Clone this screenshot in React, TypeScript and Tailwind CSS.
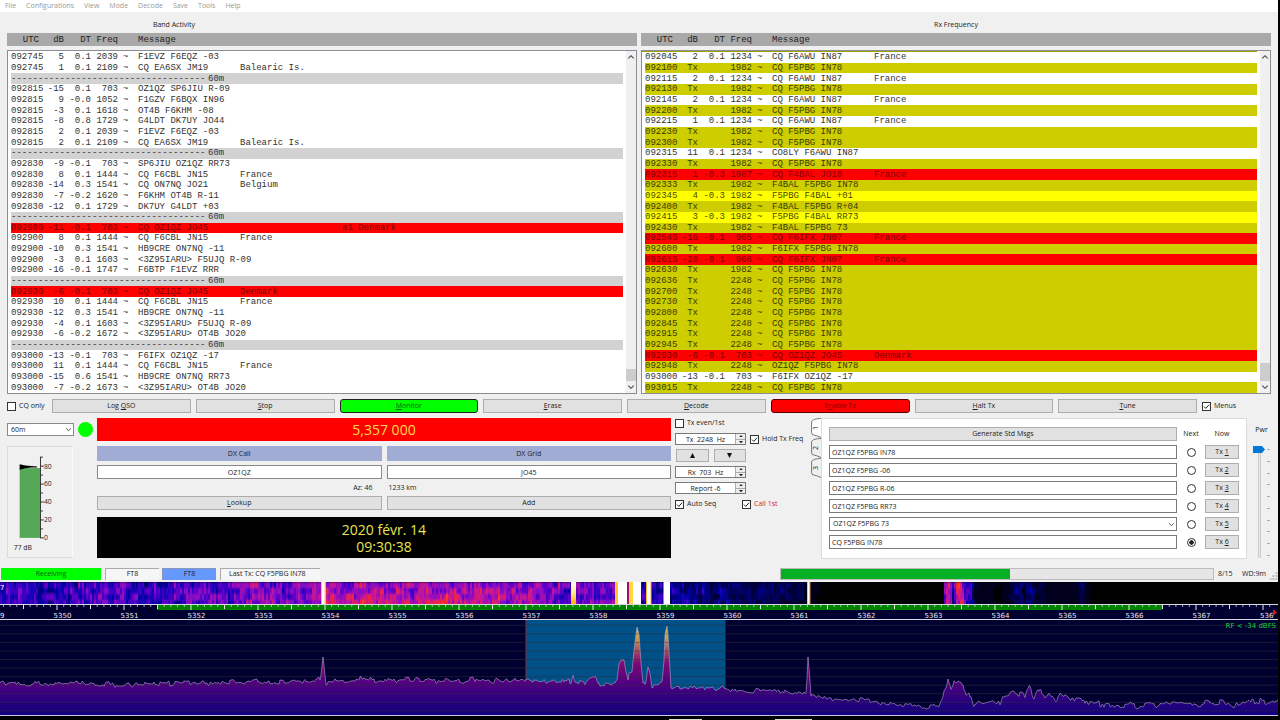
import { useMemo, type ReactNode } from "react";

type Tone = "plain" | "tx" | "me" | "new" | "sep";
type Row = { tone: Tone; utc?: string; db?: string; dt?: string; freq?: string; msg?: string; country?: string; far?: boolean };

const sep: Row = { tone: "sep" };
const rx = (utc: string, db: string, dt: string, freq: string, msg: string, country = "", tone: Tone = "plain"): Row => ({
  tone, utc, db, dt, freq, msg, country,
});
const tx = (utc: string, freq: string, msg: string): Row => ({ tone: "tx", utc, db: "Tx", dt: "", freq, msg, country: "" });

const band: Row[] = [
  rx("092745", "5", "0.1", "2039", "F1EVZ F6EQZ -03"),
  rx("092745", "1", "0.1", "2109", "CQ EA6SX JM19", "Balearic Is."),
  sep,
  rx("092815", "-15", "0.1", "703", "OZ1QZ SP6JIU R-09"),
  rx("092815", "9", "-0.0", "1052", "F1GZV F6BQX IN96"),
  rx("092815", "-3", "0.1", "1618", "OT4B F6KHM -08"),
  rx("092815", "-8", "0.8", "1729", "G4LDT DK7UY JO44"),
  rx("092815", "2", "0.1", "2039", "F1EVZ F6EQZ -03"),
  rx("092815", "2", "0.1", "2109", "CQ EA6SX JM19", "Balearic Is."),
  sep,
  rx("092830", "-9", "-0.1", "703", "SP6JIU OZ1QZ RR73"),
  rx("092830", "8", "0.1", "1444", "CQ F6CBL JN15", "France"),
  rx("092830", "-14", "0.3", "1541", "CQ ON7NQ JO21", "Belgium"),
  rx("092830", "-7", "-0.2", "1620", "F6KHM OT4B R-11"),
  rx("092830", "-12", "0.1", "1729", "DK7UY G4LDT +03"),
  sep,
  { ...rx("092900", "-11", "-0.1", "703", "CQ OZ1QZ JO45", "a1 Denmark", "new"), far: true },
  rx("092900", "8", "0.1", "1444", "CQ F6CBL JN15", "France"),
  rx("092900", "-10", "0.3", "1541", "HB9CRE ON7NQ -11"),
  rx("092900", "-3", "0.1", "1603", "<3Z95IARU> F5UJQ R-09"),
  rx("092900", "-16", "-0.1", "1747", "F6BTP F1EVZ RRR"),
  sep,
  rx("092930", "-6", "-0.1", "703", "CQ OZ1QZ JO45", "Denmark", "new"),
  rx("092930", "10", "0.1", "1444", "CQ F6CBL JN15", "France"),
  rx("092930", "-12", "0.3", "1541", "HB9CRE ON7NQ -11"),
  rx("092930", "-4", "0.1", "1603", "<3Z95IARU> F5UJQ R-09"),
  rx("092930", "-6", "-0.2", "1672", "<3Z95IARU> OT4B JO20"),
  sep,
  rx("093000", "-13", "-0.1", "703", "F6IFX OZ1QZ -17"),
  rx("093000", "11", "0.1", "1444", "CQ F6CBL JN15", "France"),
  rx("093000", "-15", "0.6", "1541", "HB9CRE ON7NQ RR73"),
  rx("093000", "-7", "-0.2", "1673", "<3Z95IARU> OT4B JO20"),
];

const rxFreq: Row[] = [
  rx("092045", "2", "0.1", "1234", "CQ F6AWU IN87", "France"),
  tx("092100", "1982", "CQ F5PBG IN78"),
  rx("092115", "2", "0.1", "1234", "CQ F6AWU IN87", "France"),
  tx("092130", "1982", "CQ F5PBG IN78"),
  rx("092145", "2", "0.1", "1234", "CQ F6AWU IN87", "France"),
  tx("092200", "1982", "CQ F5PBG IN78"),
  rx("092215", "1", "0.1", "1234", "CQ F6AWU IN87", "France"),
  tx("092230", "1982", "CQ F5PBG IN78"),
  tx("092300", "1982", "CQ F5PBG IN78"),
  rx("092315", "11", "0.1", "1234", "CO8LY F6AWU IN87"),
  tx("092330", "1982", "CQ F5PBG IN78"),
  rx("092315", "1", "-0.3", "1087", "CQ F4BAL JO10", "France", "new"),
  tx("092333", "1982", "F4BAL F5PBG IN78"),
  rx("092345", "4", "-0.3", "1982", "F5PBG F4BAL +01", "", "me"),
  tx("092400", "1982", "F4BAL F5PBG R+04"),
  rx("092415", "3", "-0.3", "1982", "F5PBG F4BAL RR73", "", "me"),
  tx("092430", "1982", "F4BAL F5PBG 73"),
  rx("092545", "-16", "-0.1", "965", "CQ F6IFX JN07", "France", "new"),
  tx("092600", "1982", "F6IFX F5PBG IN78"),
  rx("092615", "-20", "-0.1", "966", "CQ F6IFX JN07", "France", "new"),
  tx("092630", "1982", "CQ F5PBG IN78"),
  tx("092636", "2248", "CQ F5PBG IN78"),
  tx("092700", "2248", "CQ F5PBG IN78"),
  tx("092730", "2248", "CQ F5PBG IN78"),
  tx("092800", "2248", "CQ F5PBG IN78"),
  tx("092845", "2248", "CQ F5PBG IN78"),
  tx("092915", "2248", "CQ F5PBG IN78"),
  tx("092945", "2248", "CQ F5PBG IN78"),
  rx("092930", "-6", "-0.1", "703", "CQ OZ1QZ JO45", "Denmark", "new"),
  tx("092948", "2248", "OZ1QZ F5PBG IN78"),
  rx("093000", "-13", "-0.1", "703", "F6IFX OZ1QZ -17"),
  tx("093015", "2248", "CQ F5PBG IN78"),
];

const toneClass: Record<Tone, string> = {
  plain: "text-[#333]",
  tx: "bg-[#cdcd00] text-[#3c3c00]",
  me: "bg-[#ffff00] text-[#4a4a00]",
  new: "bg-[#ff0000] text-[#7d0000]",
  sep: "bg-[#d2d2d2] text-[#333]",
};

function Cols() {
  return (
    <colgroup>
      <col className="w-8" />
      <col className="w-[21px]" />
      <col className="w-[27px]" />
      <col className="w-[27px]" />
      <col className="w-[20px]" />
      <col className="w-[102px]" />
      <col />
    </colgroup>
  );
}

function Chevron({ className, d = "M1.5 3l3 3 3-3" }: { className?: string; d?: string }) {
  return (
    <svg viewBox="0 0 9 9" className={className} fill="none" stroke="#444" strokeWidth="1.2">
      <path d={d} />
    </svg>
  );
}

function Log({ rows, label, strip, tallThumb }: { rows: Row[]; label: string; strip?: boolean; tallThumb?: boolean }) {
  return (
    <section aria-label={label} className="min-w-0 font-['Liberation_Mono',monospace] text-[9px] leading-[10px]">
      <div className="bg-[#a9a9a9] pl-1">
        <table className="h-[13px] w-full table-fixed border-collapse text-[#222]">
          <Cols />
          <thead>
            <tr className="*:p-0 *:text-right *:font-normal">
              <th><span className="mr-1">UTC</span></th>
              <th>dB</th>
              <th>DT</th>
              <th>Freq</th>
              <th />
              <th><span className="block text-left">Message</span></th>
              <th />
            </tr>
          </thead>
        </table>
      </div>
      <div className="mt-1 flex h-[344px] border border-[#8a8d93] bg-white">
        <div className={`min-w-0 flex-1 border-t pl-[3px] ${strip ? "border-[#a0a000]" : "border-white"}`}>
          <table className="h-full w-full table-fixed border-collapse whitespace-nowrap">
            <Cols />
            <tbody>
              {rows.map((r, i) =>
                r.tone === "sep" ? (
                  <tr key={i} className={toneClass.sep}>
                    <td colSpan={7} className="p-0">
                      <div className="flex">
                        <span className="w-[197px] overflow-hidden">------------------------------------</span>
                        <span>60m</span>
                      </div>
                    </td>
                  </tr>
                ) : (
                  <tr key={i} className={`*:p-0 ${toneClass[r.tone]}`}>
                    <td>{r.utc}</td>
                    <td className="text-right">{r.db}</td>
                    <td className="text-right">{r.dt}</td>
                    <td className="text-right">{r.freq}</td>
                    <td><span className="ml-[5px]">~</span></td>
                    <td>{r.msg}</td>
                    <td>
                      <span className={r.far ? "pl-[102px]" : ""}>{r.country}</span>
                    </td>
                  </tr>
                ),
              )}
            </tbody>
          </table>
        </div>
        <div className="ml-[3px] flex w-[10px] flex-col items-center justify-between bg-[#f0f0f0] py-0.5">
          <Chevron className="w-2" d="M1.5 6l3-3 3 3" />
          <div className="flex w-full flex-1 flex-col justify-end pb-0.5">
            <div className={`w-full bg-[#cdcdcd] ${tallThumb ? "h-[18px]" : "h-3"}`} />
          </div>
          <Chevron className="w-2" />
        </div>
      </div>
    </section>
  );
}

function Check({ label, checked, red }: { label: ReactNode; checked?: boolean; red?: boolean }) {
  return (
    <label className={`relative flex h-[10px] items-center gap-[3px] whitespace-nowrap ${red ? "text-[#d8202c]" : ""}`}>
      <input
        type="checkbox"
        defaultChecked={checked}
        className="peer h-[9px] w-[9px] shrink-0 appearance-none border border-[#333] bg-white"
      />
      <svg viewBox="0 0 9 9" className="pointer-events-none absolute left-0 hidden w-[9px] peer-checked:block" fill="none" stroke="#222">
        <path d="M2 4.6l1.8 1.8L7.2 2.6" />
      </svg>
      {label}
    </label>
  );
}

function Btn({ children, className = "" }: { children: ReactNode; className?: string }) {
  return (
    <button className={`border border-[#adadad] bg-[#e1e1e1] text-center leading-[10px] ${className}`}>{children}</button>
  );
}

function Spin({ label, value }: { label: string; value: string }) {
  return (
    <div className="flex h-3 w-[71px] shrink-0 border border-[#7a7a7a] bg-white">
      <input aria-label={label} defaultValue={value} className="h-full w-[59px] bg-transparent text-center outline-none" />
      <div className="flex w-[10px] flex-col border-l border-[#adadad] bg-[#ededed]">
        <button aria-label={`${label} up`} className="flex flex-1 items-center justify-center border-b border-[#adadad]">
          <svg viewBox="0 0 5 3" className="w-1"><path d="M0 3l2.5-3L5 3z" fill="#222" /></svg>
        </button>
        <button aria-label={`${label} down`} className="flex flex-1 items-center justify-center">
          <svg viewBox="0 0 5 3" className="w-1"><path d="M0 0l2.5 3L5 0z" fill="#222" /></svg>
        </button>
      </div>
    </div>
  );
}

function Gauge() {
  const marks = [80, 60, 40, 20, 0];
  return (
    <svg viewBox="0 0 66 112" className="h-[112px] w-[66px] border border-[#dcdcdc] border-r-[#fafafa] text-[7px]">
      <rect x="12" y="21" width="21" height="72" fill="#55a855" />
      <path d="M12 17l6 1.4 6 .4 6 .7v1h-6l-6 .8-6 1.4z" fill="#000" />
      <path d="M33.5 9.5V93" stroke="#333" />
      {marks.map((m, i) => (
        <g key={m}>
          <path d={`M33 ${19 + i * 18.5}h4M33 ${9.75 + i * 18.5}h3`} stroke="#333" />
          <text x="37" y={21.5 + i * 18.5} fill="#222">{m}</text>
        </g>
      ))}
      <text x="6" y="105.5" fill="#222">77 dB</text>
    </svg>
  );
}

function TabButton({ n }: { n: number }) {
  return (
    <button className="relative flex h-5 w-[10px] items-center justify-center">
      <svg viewBox="0 0 10 20" className="absolute inset-0 h-5 w-[10px]" fill={n === 1 ? "#fff" : "#f0f0f0"} stroke="#555" strokeWidth=".8">
        <path d="M10 .5C6 .5 .8 1.5 .6 4v10.500c0 2.5 2 2.5 5 3.2L10 19.5" />
      </svg>
      <span className="relative -rotate-90">{n}</span>
    </button>
  );
}

const messages = ["OZ1QZ F5PBG IN78", "OZ1QZ F5PBG -06", "OZ1QZ F5PBG R-06", "OZ1QZ F5PBG RR73", "OZ1QZ F5PBG 73", "CQ F5PBG IN78"];

/* ---- waterfall and spectrum ---- */

const hash = (a: number, b: number) => {
  const s = Math.sin(a * 127.1 + b * 311.7) * 43758.5453;
  return s - Math.floor(s);
};

const lerp = (pts: number[][], x: number) => {
  for (let i = 1; i < pts.length; i++) {
    if (x <= pts[i][0]) {
      const [x0, y0] = pts[i - 1];
      const [x1, y1] = pts[i];
      return y0 + ((y1 - y0) * (x - x0)) / (x1 - x0);
    }
  }
  return pts[pts.length - 1][1];
};

const heat = [
  "#000000", "#00001c", "#000038", "#000058", "#000080", "#0400a4", "#1a00b8", "#3a00c4",
  "#6004c8", "#8208c4", "#a00cb4", "#c0149c", "#dc1c6c", "#f02838", "#ff4010", "#ff7a00",
];

const level = [
  [0, 6.8], [60, 6.6], [110, 7.4], [150, 6.6], [200, 7.4], [230, 7.6], [250, 8.8], [320, 8.8], [330, 10.4], [430, 10.4], [500, 10.2],
  [530, 9.2], [560, 8], [580, 8.4], [612, 8.2], [620, 6], [660, 5.5], [672, 4.5], [700, 4], [727, 3.6], [745, 2.6], [770, 3], [800, 2], [811, 1.2],
  [820, 0.4], [850, 0], [942, 0], [944, 9], [949, 12], [952, 6], [954, 8], [957, 12.5], [961, 11], [964, 8], [972, 4.5], [975, 1.5], [985, 0.8], [1000, 0.4],
  [1010, 1.5], [1018, 4], [1024, 1.8], [1029, 4.2], [1035, 2], [1055, 1], [1076, 1], [1081, 3], [1086, 0.8], [1100, 0], [1280, 0],
];

function useWaterfall() {
  return useMemo(() => {
    const paths = heat.map(() => "");
    for (let x = 0; x < 1100; x += 2) {
      const base = lerp(level, x);
      if (base < 0.3) continue;
      const col = (hash(x, 1) - 0.5) * 2;
      for (let y = 0; y < 23; y += 3) {
        const blob = (hash(Math.floor(x / 6), Math.floor(y / 6) + 9) - 0.5) * 3.6;
        const fine = (hash(x, Math.floor(y / 6) + 3) - 0.5) * 2.4;
        const fall = base > 9 && base < 11 ? (y - 11) * 0.09 : 0;
        const v = base + fall + (col + blob + fine) * Math.min(1, base / 5);
        const k = Math.max(0, Math.min(heat.length - 2, Math.round(v)));
        if (k > 0) paths[k] += `M${x} ${y}h2v3h-2z`;
      }
    }
    return paths;
  }, []);
}

const trace = [
  [0, 683], [40, 684], [90, 683], [130, 685], [180, 683], [240, 682], [300, 681], [320, 679], [321, 674], [323, 657], [325, 674], [326, 682],
  [360, 680], [430, 680], [500, 680], [540, 681], [571, 681], [573, 674], [576, 682], [585, 684], [590, 678], [596, 677], [598, 684], [612, 684],
  [617, 680], [619, 664], [621, 660], [624, 660], [626, 672], [628, 680], [629, 673], [632, 672], [634, 650], [636, 634], [637, 627], [639, 634], [641, 662],
  [643, 685], [646, 680], [648, 667], [650, 673], [652, 686], [656, 685], [662, 683], [664, 660], [665, 634], [667, 626], [668, 634], [670, 670],
  [671, 689], [680, 688], [700, 687], [716, 689], [723, 687], [730, 688], [745, 693], [765, 690], [780, 690], [790, 693], [806, 694], [807, 680], [808, 657],
  [810, 680], [811, 695], [820, 696], [834, 700], [850, 699], [875, 701], [890, 704], [905, 705], [925, 708], [940, 706], [943, 698], [945, 688],
  [948, 678], [951, 689], [954, 682], [958, 681], [963, 682], [966, 696], [971, 694], [974, 706], [978, 700], [1000, 703], [1003, 696], [1014, 692],
  [1025, 696], [1029, 685], [1034, 700], [1038, 690], [1046, 698], [1049, 693], [1055, 700], [1060, 693], [1070, 699], [1090, 702], [1110, 706], [1150, 705], [1180, 703],
  [1200, 704], [1225, 702], [1235, 706], [1245, 702], [1280, 701],
];

function useTrace() {
  return useMemo(() => {
    let d = "";
    for (let x = 0; x <= 1278; x++) {
      const y = lerp(trace, x);
      const n = (hash(Math.floor(x / 2), 5) - 0.5) * 3 + (hash(Math.floor(x / 5), 7) - 0.5) * 4;
      d += `${x ? "L" : "M"}${x} ${(y + (y < 674 ? 0 : n) - 582).toFixed(1)}`;
    }
    return d;
  }, []);
}

function Panadapter() {
  const cells = useWaterfall();
  const line = useTrace();
  const minor = Array.from({ length: 190 }, (_, i) => i - 8);
  const labels = Array.from({ length: 18 }, (_, i) => 5350 + i);
  return (
    <svg
      viewBox="0 0 1278 138"
      preserveAspectRatio="xMinYMin slice"
      className="block w-full font-['DejaVu_Sans',sans-serif] text-[7px]"
      role="img"
      aria-label="Waterfall and spectrum"
    >
      <defs>
        <linearGradient id="power" gradientUnits="userSpaceOnUse" x1="0" y1="44" x2="0" y2="133">
          <stop offset="0" stopColor="#e0d050" />
          <stop offset=".16" stopColor="#c09050" />
          <stop offset=".3" stopColor="#a04060" />
          <stop offset=".42" stopColor="#800878" />
          <stop offset=".62" stopColor="#560082" />
          <stop offset=".8" stopColor="#300080" />
          <stop offset="1" stopColor="#10007c" />
        </linearGradient>
        <linearGradient id="hot" x1="0" y1="0" x2="0" y2="1">
          <stop offset="0" stopColor="#fff" />
          <stop offset=".5" stopColor="#ffe880" />
          <stop offset="1" stopColor="#ffa000" />
        </linearGradient>
        <clipPath id="fall"><rect width="1278" height="22.5" /></clipPath>
        <filter id="soft"><feGaussianBlur stdDeviation=".6 1" /></filter>
      </defs>
      <rect width="1278" height="138" fill="#000" />
      <g clipPath="url(#fall)">
        <g filter="url(#soft)">
          {cells.map((d, i) => (d ? <path key={i} d={d} fill={heat[i]} /> : null))}
        </g>
        <rect x="321" width="5" height="23" fill="#ffb060" />
        <rect x="322" width="2.6" height="23" fill="#fff" />
        <rect x="571" width="5" height="23" fill="url(#hot)" />
        <rect x="615" width="4" height="23" fill="#ffc820" />
        <rect x="618" width="9" height="23" fill="#fff" />
        <rect x="627" width="2" height="23" fill="#a01060" />
        <rect x="629" width="4" height="23" fill="#ffd840" />
        <rect x="633" width="8" height="23" fill="#fff" />
        <rect x="646" width="5.5" height="23" fill="#ffb030" />
        <rect x="647" width="3.5" height="23" fill="#fff" />
        <rect x="663.5" width="6.5" height="23" fill="#fff" />
        <rect x="807" width="3.5" height="23" fill="#e08020" />
        <rect x="807.5" width="2" height="23" fill="#fff" />
      </g>
      <text x="0" y="8" fill="#fff">7</text>

      <rect y="23" width="1278" height="111" fill="#000030" />
      <rect x="157" y="23" width="1005" height="5" fill="#008400" />
      <path d="M0 22.5H1278M0 37.5H1278" stroke="#d8d8e0" strokeWidth="1" />
      {minor.map((i) => {
        const x = 57 + i * 6.7;
        const len = i % 10 === 0 ? 5 : i % 5 === 0 ? 4 : 2;
        return <path key={i} d={`M${x.toFixed(1)} 23v${len}`} stroke="#e8e8e8" strokeWidth={i % 5 === 0 ? 1 : 0.7} />;
      })}
      <text x="0" y="36" fill="#e8e8f0">9</text>
      {labels.map((n, i) => (
        <text key={n} x={62.5 + i * 67} y="36" textAnchor="middle" fill="#e8e8f0">{n}</text>
      ))}
      <text x="1260" y="36" fill="#e8e8f0">536</text>
      <path d="M1273 27l4 3.5-4 3.5z" fill="#e01020" />

      <rect x="526" y="38" width="199.5" height="95" fill="#00508a" />
      <path d="M526 38V133" stroke="#803040" />
      <path d={`${line}V133H0z`} fill="url(#power)" />
      {Array.from({ length: 11 }, (_, i) => (
        <path key={i} d={`M0 ${(43.3 + i * 8.55).toFixed(1)}H1278`} stroke="#303038" strokeOpacity=".5" />
      ))}
      <path d={line} fill="none" stroke="#b0a0c8" strokeOpacity=".75" strokeWidth=".8" />
      <text x="1276" y="45.5" textAnchor="end" fill="#20d040">RF &lt; -34 dBFS</text>
      <path d="M0 133.5H1278" stroke="#c8c8e8" />
      <rect y="134" width="1278" height="4" fill="#000" />
      <path d="M669 137.5h33M775 137.5h37" stroke="#ddd" />
    </svg>
  );
}

export default function App() {
  return (
    <div className="min-h-screen bg-black pr-0.5 font-['Open_Sans',sans-serif] text-[7px] leading-[10px] text-[#222]">
      <div className="flex flex-col bg-[#f0f0f0]">
        <nav className="flex h-3 items-center gap-[10px] bg-white pl-[5px] text-[#999]">
          {["File", "Configurations", "View", "Mode", "Decode", "Save", "Tools", "Help"].map((m) => (
            <button key={m}>{m}</button>
          ))}
        </nav>

        <div className="grid grid-cols-2 gap-x-1 px-[7px]">
          <h2 className="flex h-[21px] w-[53%] items-end justify-center pb-[3px]">Band Activity</h2>
          <h2 className="flex h-[21px] items-end justify-center pb-[3px]">Rx Frequency</h2>
          <Log rows={band} label="Band Activity" />
          <Log rows={rxFreq} label="Rx Frequency" strip tallThumb />
        </div>

        <div className="mt-[5px] flex h-[14px] items-center gap-[5px] pr-[42px] pl-[7px]">
          <div className="w-10"><Check label="CQ only" /></div>
          <Btn className="h-[14px] flex-1">Log <u>Q</u>SO</Btn>
          <Btn className="h-[14px] flex-1"><u>S</u>top</Btn>
          <button className="h-[14px] flex-1 rounded-[3px] border border-[#222] bg-[#00ff00] text-[#0a5a0a]"><u>M</u>onitor</button>
          <Btn className="h-[14px] flex-1"><u>E</u>rase</Btn>
          <Btn className="h-[14px] flex-1"><u>D</u>ecode</Btn>
          <button className="h-[14px] flex-1 rounded-[3px] border border-[#5a0000] bg-[#ff0000] text-[#7d0000]">E<u>n</u>able Tx</button>
          <Btn className="h-[14px] flex-1"><u>H</u>alt Tx</Btn>
          <Btn className="h-[14px] flex-1"><u>T</u>une</Btn>
          <div className="w-[34px]"><Check label="Menus" checked /></div>
        </div>

        <main className="mt-[5px] flex pr-2 pl-[7px]">
          <div className="w-[86px] shrink-0">
            <div className="flex h-[23px] items-center gap-1">
              <div className="relative">
                <select aria-label="Band" className="h-[13px] w-[67px] appearance-none border border-[#8a8a8a] bg-white pl-[3px] leading-[10px]">
                  <option>60m</option>
                </select>
                <Chevron className="pointer-events-none absolute top-[3px] right-0.5 w-[7px]" />
              </div>
              <span className="h-[15px] w-[15px] rounded-full bg-[#00ff00]" />
            </div>
            <div className="mt-[5px]"><Gauge /></div>
          </div>

          <div className="ml-1 flex flex-[574] flex-col">
            <div className="flex h-[23px] items-center justify-center bg-[#ff0000] text-[14px] text-[#ffd84a]">5,357 000</div>
            <div className="mt-[5px] grid grid-cols-2 gap-x-[5px] gap-y-1 text-center">
              <label htmlFor="dxcall" className="h-[15px] bg-[#a0acd4] leading-[15px]">DX Call</label>
              <label htmlFor="dxgrid" className="h-[15px] bg-[#a0acd4] leading-[15px]">DX Grid</label>
              <input id="dxcall" defaultValue="OZ1QZ" className="h-[14px] min-w-0 border border-[#8a8a8a] bg-white text-center" />
              <input id="dxgrid" defaultValue="JO45" className="h-[14px] min-w-0 border border-[#8a8a8a] bg-white text-center" />
            </div>
            <div className="grid h-[17px] grid-cols-2 items-center gap-[5px]">
              <span className="pr-[9px] text-right">Az: 46</span>
              <span className="pl-0.5">1233 km</span>
            </div>
            <div className="grid grid-cols-2 gap-[5px]">
              <Btn className="h-[14px]"><u>L</u>ookup</Btn>
              <Btn className="h-[14px]">Add</Btn>
            </div>
            <div className="mt-[7px] flex h-[41px] flex-col items-center justify-center bg-black text-[14px] leading-[17px] text-[#e6e650]">
              <span>2020 févr. 14</span>
              <span>09:30:38</span>
            </div>
          </div>

          <div className="ml-1 flex w-[136px] shrink-0 flex-col">
            <Check label="Tx even/1st" />
            <div className="mt-[5px] flex items-center gap-1">
              <Spin label="Tx frequency" value="Tx  2248  Hz" />
              <Check label="Hold Tx Freq" checked />
            </div>
            <div className="mt-1 grid w-[71px] grid-cols-2 gap-[5px] pl-px">
              <Btn className="flex h-[13px] items-center justify-center">
                <svg viewBox="0 0 6 6" className="w-[5px]"><path d="M0 6l3-6 3 6z" fill="#111" /></svg>
              </Btn>
              <Btn className="flex h-[13px] items-center justify-center">
                <svg viewBox="0 0 6 6" className="w-[5px]"><path d="M0 0l3 6 3-6z" fill="#111" /></svg>
              </Btn>
            </div>
            <div className="mt-1"><Spin label="Rx frequency" value="Rx  703  Hz" /></div>
            <div className="mt-1"><Spin label="Report" value="Report -6" /></div>
            <div className="mt-[5px] flex">
              <div className="w-[67px]"><Check label="Auto Seq" checked /></div>
              <Check label="Call 1st" checked red />
            </div>
          </div>

          <div className="w-[10px] shrink-0">
            {[1, 2, 3].map((n) => <TabButton key={n} n={n} />)}
          </div>
          <div className="min-w-0 flex-[426]">
            <div className="grid h-[141px] grid-cols-[1fr_28px_34px] content-start items-start border border-[#dcdcdc] bg-white px-[7px] pt-2">
              <Btn className="mb-1 h-[14px]">Generate Std Msgs</Btn>
              <span className="pt-0.5 text-center">Next</span>
              <span className="pt-0.5 text-center">Now</span>
              {messages.map((m, i) => (
                <div key={i} className="col-span-3 grid h-[18px] grid-cols-subgrid items-start">
                  {i === 4 ? (
                    <div className="relative">
                      <select aria-label="Message 5" className="h-[14px] w-full appearance-none border border-[#7a7a7a] bg-white pl-[3px] leading-[10px]">
                        <option>{m}</option>
                      </select>
                      <Chevron className="pointer-events-none absolute top-[4px] right-0.5 w-[7px]" />
                    </div>
                  ) : (
                    <input aria-label={`Message ${i + 1}`} defaultValue={m} className="h-[14px] w-full min-w-0 border border-[#7a7a7a] bg-white pl-0.5" />
                  )}
                  <input
                    type="radio"
                    name="next"
                    aria-label={`Next message ${i + 1}`}
                    defaultChecked={i === 5}
                    className="mt-[3px] h-[9px] w-[9px] appearance-none justify-self-center rounded-full border border-[#333] bg-white checked:bg-[radial-gradient(circle,#222_40%,#fff_50%)]"
                  />
                  <Btn className="h-[14px]">Tx <u>{i + 1}</u></Btn>
                </div>
              ))}
            </div>
          </div>

          <div className="ml-[6px] flex w-[17px] shrink-0 flex-col">
            <label htmlFor="pwr" className="mt-[7px] text-center">Pwr</label>
            <div className="mt-[11px] flex">
              <input
                id="pwr"
                type="range"
                defaultValue={100}
                className="h-[112px] w-3 appearance-none bg-[linear-gradient(90deg,transparent_5px,#ccc_5px,#ccc_6px,#e7e7e7_6px,#e7e7e7_7px,#ccc_7px,#ccc_8px,transparent_8px)] [direction:rtl] [writing-mode:vertical-lr] [&::-webkit-slider-thumb]:h-[7px] [&::-webkit-slider-thumb]:w-3 [&::-webkit-slider-thumb]:appearance-none [&::-webkit-slider-thumb]:bg-[#0078d7] [&::-webkit-slider-thumb]:[clip-path:polygon(0_0,75%_0,100%_50%,75%_100%,0_100%)]"
              />
              <div className="ml-0.5 flex h-[110px] w-[3px] flex-col justify-between pt-[3px]">
                {Array.from({ length: 10 }, (_, i) => <span key={i} className="h-px w-full bg-[#aaa]" />)}
              </div>
            </div>
          </div>
        </main>

        <footer className="mt-[9px] mb-0.5 flex h-3 items-center pl-px whitespace-nowrap">
          <span className="h-3 w-[100px] bg-[#00ff00] text-center leading-3 text-[#0a5a0a]">Receiving</span>
          <span className="ml-1 h-3 w-[54px] border-t border-l border-[#aaa] bg-[#f6f6f6] text-center">FT8</span>
          <span className="ml-[3px] h-3 w-[54px] border-t border-l border-[#8899bb] bg-[#6699ff] text-center">FT8</span>
          <span className="ml-1 h-3 w-[100px] border-t border-l border-[#aaa] bg-[#f6f6f6] pl-2">Last Tx: CQ F5PBG IN78</span>
          <div role="progressbar" aria-label="Period" aria-valuenow={8} aria-valuemax={15} className="ml-auto h-3 w-[34%] border border-[#bcbcbc] bg-[#e6e6e6]">
            <div className="h-full w-[53%] bg-[#06b025]" />
          </div>
          <span className="ml-1 w-[20px]">8/15</span>
          <span className="ml-1 w-[24px]">WD:9m</span>
          <svg viewBox="0 0 8 8" className="mt-1 ml-1 w-2" fill="#bbb">
            <path d="M5.5 0h2v2h-2zM5.5 3h2v2h-2zM2.5 3h2v2h-2zM5.5 6h2v2h-2zM2.5 6h2v2h-2zM0 6h1.5v2H0z" />
          </svg>
        </footer>
      </div>
      <Panadapter />
    </div>
  );
}
